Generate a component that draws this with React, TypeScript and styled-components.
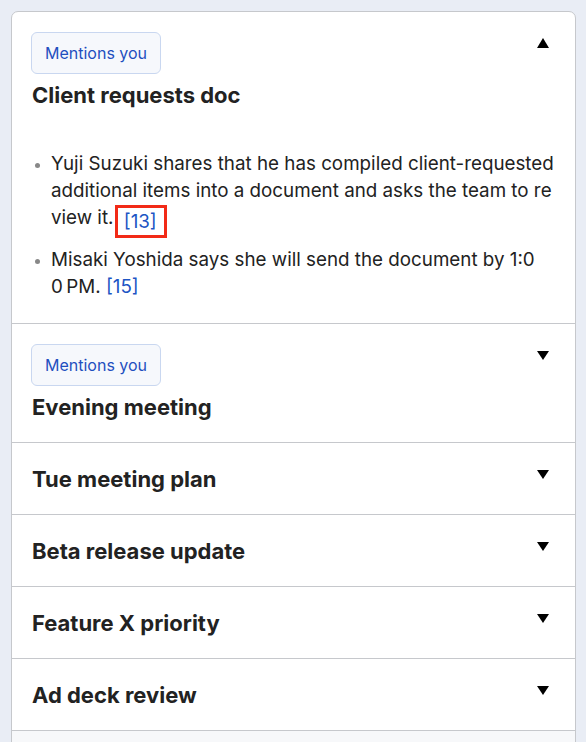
import React, { useState } from 'react';
import styled, { createGlobalStyle } from 'styled-components';

type Topic = {
    title: string;
    mention?: boolean;
    points?: { text: string; ref: string; marked?: boolean }[];
};

const topics: Topic[] = [
    {
        title: 'Client requests doc',
        mention: true,
        points: [
            {
                text: 'Yuji Suzuki shares that he has compiled client-requested additional items into a document and asks the team to review it.',
                ref: '[13]',
                marked: true,
            },
            { text: 'Misaki Yoshida says she will send the document by 1:00\u202FPM.', ref: '[15]' },
        ],
    },
    { title: 'Evening meeting', mention: true },
    { title: 'Tue meeting plan' },
    { title: 'Beta release update' },
    { title: 'Feature X priority' },
    { title: 'Ad deck review' },
];

function Caret({ up }: { up: boolean }) {
    return (
        <CaretBox>
            {up ? (
                <svg width="12" height="10" viewBox="0 0 12 10">
                    <polygon points="6,0 12,10 0,10" fill="#000" />
                </svg>
            ) : (
                <svg width="12" height="9" viewBox="0 0 12 9">
                    <polygon points="0,0 12,0 6,9" fill="#000" />
                </svg>
            )}
        </CaretBox>
    );
}

function App() {
    const [open, setOpen] = useState<number>(0);

    return (
        <Page>
            <GlobalStyle />
            <Card>
                {topics.map((t, i) => (
                    <Section key={t.title}>
                        <Header onClick={() => setOpen(open === i ? -1 : i)}>
                            <HeadText>
                                {t.mention && <Badge>Mentions you</Badge>}
                                <Title>{t.title}</Title>
                            </HeadText>
                            <Caret up={open === i} />
                        </Header>
                        {open === i && t.points && (
                            <Body>
                                <Points>
                                    {t.points.map(p => (
                                        <Point key={p.ref}>
                                            {p.text}{' '}
                                            {p.marked ? (
                                                <Marked><Ref href="#">{p.ref}</Ref></Marked>
                                            ) : (
                                                <Ref href="#">{p.ref}</Ref>
                                            )}
                                        </Point>
                                    ))}
                                </Points>
                            </Body>
                        )}
                    </Section>
                ))}
                <Footer />
            </Card>
        </Page>
    );
}

export default App;

const GlobalStyle = createGlobalStyle`
    body {
        margin: 0;
        background: #e9edf5;
        font-family: Inter, "Liberation Sans", Arial, sans-serif;
        color: #222;
        overflow: hidden;
    }
`
const Page = styled.div`
    padding: 11px 10px 0 11px;
    height: 742px;
    box-sizing: border-box;
    overflow: hidden;
`
const Card = styled.div`
    background: #fff;
    border: 1px solid #c6c8cc;
    border-radius: 7px;
    overflow: hidden;
`
const Section = styled.div`
    border-bottom: 1px solid #c6c8cc;
`
const Header = styled.div`
    display: flex;
    justify-content: space-between;
    align-items: flex-start;
    padding: 20px 20px 19px 19px;
    cursor: pointer;
`
const HeadText = styled.div`
    display: flex;
    flex-direction: column;
    align-items: flex-start;
    gap: 5px;
`
const Badge = styled.span`
    box-sizing: border-box;
    height: 42px;
    display: inline-flex;
    align-items: center;
    padding: 0 13px;
    font-size: 16px;
    color: #1f4fbf;
    background: #f6f8fc;
    border: 1px solid #c9d7f0;
    border-radius: 6px;
`
const Title = styled.div`
    font-size: 22px;
    line-height: 32px;
    font-weight: 700;
    padding-left: 1px;
    color: #222;
`
const CaretBox = styled.div`
    width: 24px;
    height: 24px;
    display: flex;
    align-items: center;
    justify-content: center;
    flex-shrink: 0;
    margin-top: -1px;
`
const Body = styled.div`
    padding: 20px 19px 23px 20px;
`
const Points = styled.ul`
    margin: 0;
    padding-left: 19px;
    word-break: break-all;
`
const Point = styled.li`
    font-size: 18.8px;
    line-height: 27px;
    color: #222;
    & + & {
        margin-top: 15px;
    }
    &::marker {
        color: #888;
        font-size: 14px;
    }
`
const Ref = styled.a`
    color: #1d55c4;
    text-decoration: none;
`
const Marked = styled.span`
    border: 3px solid #f22a17;
    padding: 2px 7px 2px 6px;
    margin-left: -4px;
    position: relative;
    top: 4px;
`
const Footer = styled.div`
    height: 60px;
    background: #f7f8fa;
`
